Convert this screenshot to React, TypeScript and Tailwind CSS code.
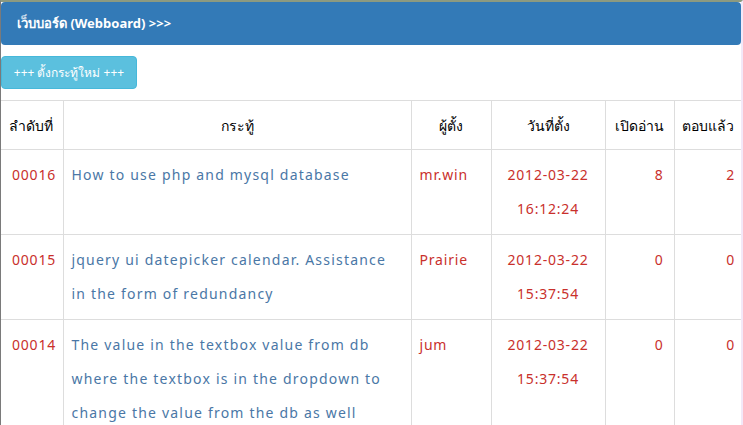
import type {FC} from "react";

type Topic = {
    id: string;
    title: string[];
    author: string;
    date: string;
    time: string;
    views: number;
    replies: number;
};

const topics: Topic[] = [
    {
        id: "00016",
        title: ["How to use php and mysql database"],
        author: "mr.win",
        date: "2012-03-22",
        time: "16:12:24",
        views: 8,
        replies: 2,
    },
    {
        id: "00015",
        title: ["jquery ui datepicker calendar. Assistance", "in the form of redundancy"],
        author: "Prairie",
        date: "2012-03-22",
        time: "15:37:54",
        views: 0,
        replies: 0,
    },
    {
        id: "00014",
        title: [
            "The value in the textbox value from db",
            "where the textbox is in the dropdown to",
            "change the value from the db as well",
        ],
        author: "jum",
        date: "2012-03-22",
        time: "15:37:54",
        views: 0,
        replies: 0,
    },
];

const App: FC = () => {
    return (
        <div className="min-h-screen bg-white border-t-2 border-t-[#8c9a80] border-l border-l-[#7a7a7a] border-r-2 border-r-[#f3e8f8] font-['Noto_Sans','Liberation_Sans',sans-serif] text-[14px] overflow-hidden">
            {/* header */}
            <div className="h-[43px] bg-[#337ab7] rounded-[4px] flex items-center px-4">
                <span className="text-white font-bold text-[13px]">เว็บบอร์ด (Webboard) &gt;&gt;&gt;</span>
            </div>

            {/* new topic */}
            <div className="pt-[11px] pb-[11px]">
                <button
                    type="button"
                    className="h-[33px] w-[136px] bg-[#5bc0de] border border-[#46b8da] rounded-[4px] text-white text-[12px]"
                >
                    +++ ตั้งกระทู้ใหม่ +++
                </button>
            </div>

            {/* topics */}
            <table className="w-[741px] border-collapse table-fixed">
                <colgroup>
                    <col className="w-[62px]"/>
                    <col className="w-[348px]"/>
                    <col className="w-[80px]"/>
                    <col className="w-[114px]"/>
                    <col className="w-[69px]"/>
                    <col className="w-[68px]"/>
                </colgroup>
                <thead>
                <tr className="h-[49px] text-black whitespace-nowrap">
                    <th className="border border-[#ddd] border-l-0 px-2 font-medium text-left">ลำดับที่</th>
                    <th className="border border-[#ddd] px-2 font-medium text-center">กระทู้</th>
                    <th className="border border-[#ddd] px-2 font-medium text-center">ผู้ตั้ง</th>
                    <th className="border border-[#ddd] px-2 font-medium text-center">วันที่ตั้ง</th>
                    <th className="border border-[#ddd] pl-1 pr-[10px] font-medium text-right">เปิดอ่าน</th>
                    <th className="border border-[#ddd] border-r-0 pl-1 pr-[8px] font-medium text-right">ตอบแล้ว</th>
                </tr>
                </thead>
                <tbody className="leading-[34px] text-[#c9302c] tracking-[0.8px]">
                {topics.map((t) => (
                    <tr key={t.id}>
                        <td className="border border-[#ddd] border-l-0 py-2 pl-[11px] align-top">{t.id}</td>
                        <td className="border border-[#ddd] py-2 px-2 align-top text-[#4a77a6] tracking-[1.2px] whitespace-nowrap">
                            {t.title.map((line) => (
                                <div key={line}>{line}</div>
                            ))}
                        </td>
                        <td className="border border-[#ddd] py-2 px-2 align-top">{t.author}</td>
                        <td className="border border-[#ddd] py-2 px-2 align-top text-center">
                            <div>{t.date}</div>
                            <div>{t.time}</div>
                        </td>
                        <td className="border border-[#ddd] py-2 px-[10px] align-top text-right">{t.views}</td>
                        <td className="border border-[#ddd] border-r-0 py-2 px-[7px] align-top text-right">{t.replies}</td>
                    </tr>
                ))}
                </tbody>
            </table>
        </div>
    );
};

export default App;
